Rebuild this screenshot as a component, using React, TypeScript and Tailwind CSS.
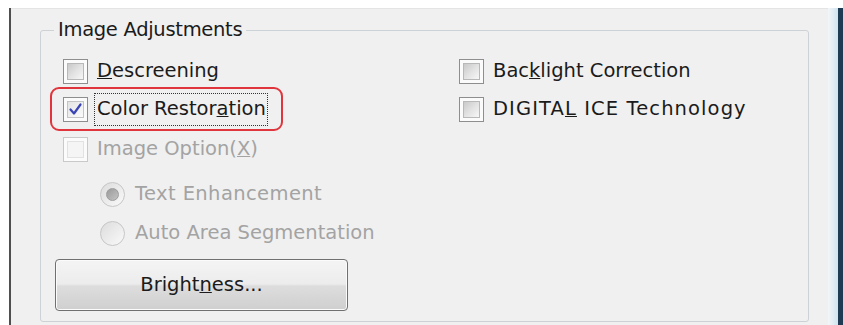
import React from "react";

function CheckBox({ checked = false, disabled = false }: { checked?: boolean; disabled?: boolean }) {
  return (
    <span
      className={`flex h-[25px] w-[25px] shrink-0 items-center justify-center border bg-[#fbfbfb] p-[3px] ${
        disabled ? "border-[#c9c9c9]" : "border-[#8e8e8e]"
      }`}
    >
      <span
        className={`flex h-full w-full items-center justify-center border ${
          disabled
            ? "border-[#e2e2e2] bg-[#f5f5f5]"
            : checked
            ? "border-[#c4c4c4] bg-gradient-to-br from-[#e4e4e4] to-[#fbfbfb]"
            : "border-[#b8b8b8] bg-gradient-to-br from-[#c9c9c9] via-[#e2e2e2] to-[#f7f7f7]"
        }`}
      >
        {checked && (
          <svg width="15" height="15" viewBox="0 0 15 15">
            <path d="M2.5 7.5 L6 11.5 L12.5 2.5" fill="none" stroke="#3a44b5" strokeWidth="2.2" strokeLinejoin="round" strokeLinecap="round" />
          </svg>
        )}
      </span>
    </span>
  );
}

function Radio({ selected = false }: { selected?: boolean }) {
  return (
    <span className="flex h-[25px] w-[25px] shrink-0 items-center justify-center rounded-full border border-[#c6c6c6] bg-gradient-to-br from-[#dcdcdc] to-[#fafafa]">
      {selected && (
        <span className="flex h-[13px] w-[13px] items-center justify-center rounded-full border border-[#9c9c9c] bg-gradient-to-br from-[#9a9a9a] to-[#c4c4c4]" />
      )}
    </span>
  );
}

export default function App() {
  return (
    <div className="flex h-[325px] w-[843px] flex-col overflow-hidden bg-white font-['DejaVu_Sans',sans-serif] text-[19.5px] leading-[24px] text-[#1b1b1b]">
      <div className="h-[8px] shrink-0 bg-white" />
      <div className="flex flex-1">
        <div className="w-[9px] bg-white" />
        <div className="w-[2px] bg-[#4f4f4f]" />
        <div className="flex-1 border-t border-[#e4e4e4] bg-[#f0f0f0] pl-[29px] pr-[19px]">
          <fieldset className="m-0 mt-[9px] h-[304px] rounded-[3px] border border-[#cdd2d6] p-0">
            <legend className="ml-[13px] px-[4px] leading-[24px] tracking-[-0.3px]">Image Adjustments</legend>
            <div className="flex pt-[10px]">
              <div className="flex w-[418px] flex-col">
                <div className="flex h-[38px] items-center pl-[22px]">
                  <CheckBox />
                  <span className="ml-[9px]">
                    <span className="underline">D</span>escreening
                  </span>
                </div>
                <div className="-my-[3px] ml-[9px] flex h-[44px] w-[233px] items-center rounded-[9px] border-2 border-[#e0353c] pl-[11px]">
                  <CheckBox checked />
                  <span className="ml-[6px] flex h-[33px] items-center border border-dotted border-[#333] pl-[2px] pr-[1px]">
                    Color Restor<span className="underline">a</span>tion
                  </span>
                </div>
                <div className="mt-[2px] flex h-[38px] items-center pl-[22px] text-[#a3a3a3]">
                  <CheckBox disabled />
                  <span className="ml-[9px]">
                    Image Option(<span className="underline">X</span>)
                  </span>
                </div>
                <div className="mt-[7px] flex h-[38px] items-center pl-[59px] text-[#a3a3a3]">
                  <Radio selected />
                  <span className="ml-[10px] tracking-[0.4px]">Text Enhancement</span>
                </div>
                <div className="mt-[1px] flex h-[38px] items-center pl-[59px] text-[#a3a3a3]">
                  <Radio />
                  <span className="ml-[10px]">Auto Area Segmentation</span>
                </div>
                <button className="ml-[14px] mt-[7px] flex h-[52px] w-[293px] items-center justify-center rounded-[4px] border border-[#707070] bg-[linear-gradient(to_bottom,#f4f4f4_0%,#ececec_48%,#dddddd_52%,#cfcfcf_100%)] text-[#1b1b1b] shadow-[inset_0_0_0_1px_#fbfbfb]">
                  Brigh<span>t</span>
                  <span className="underline">n</span>ess...
                </button>
              </div>
              <div className="flex flex-col">
                <div className="flex h-[38px] items-center">
                  <CheckBox />
                  <span className="ml-[9px]">
                    Bac<span className="underline">k</span>light Correction
                  </span>
                </div>
                <div className="flex h-[38px] items-center">
                  <CheckBox />
                  <span className="ml-[9px] tracking-[1.1px]">
                    DIGITA<span className="underline">L</span> ICE Technology
                  </span>
                </div>
              </div>
            </div>
          </fieldset>
        </div>
        <div className="w-[10px] bg-gradient-to-r from-[#f3f6f8] to-[#cfe3ef]" />
        <div className="w-[5px] bg-[#1f3b54]" />
      </div>
    </div>
  );
}
